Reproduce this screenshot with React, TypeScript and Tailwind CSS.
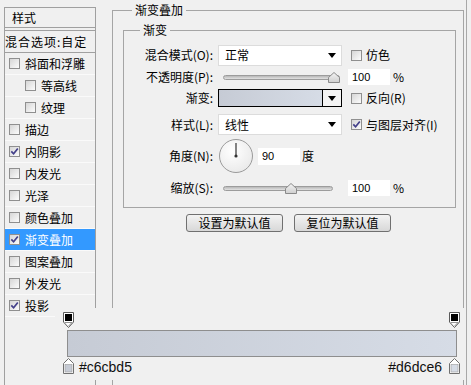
import React from "react";

const FONT = { fontFamily: '"Noto Sans CJK SC", "Noto Sans", sans-serif' };

function Box({ checked }: { checked?: boolean }) {
  return (
    <span className="w-[11px] h-[11px] border border-[#8f8f8f] bg-linear-to-br from-[#d6d6d6] to-[#fcfcfc] flex items-center justify-center shrink-0">
      {checked && (
        <svg width="9" height="9" viewBox="0 0 9 9">
          <path d="M1.3 4.3 L3.6 6.8 L7.8 1.4" stroke="#43408a" strokeWidth="1.7" fill="none" />
        </svg>
      )}
    </span>
  );
}

function Item({ label, checked, indent, active }: { label: string; checked?: boolean; indent?: boolean; active?: boolean }) {
  return (
    <div
      className={`h-[22px] flex items-center gap-[5px] border-b border-[#fafafa] ${indent ? "pl-[20px]" : "pl-[4px]"} ${active ? "bg-[#3399ff] text-white" : "text-black"}`}
    >
      <Box checked={checked} />
      <span className="text-[12px] leading-[14px]">{label}</span>
    </div>
  );
}

function Arrow() {
  return (
    <svg width="8" height="5" viewBox="0 0 8 5">
      <path d="M0 0 L8 0 L4 5 Z" fill="#000" />
    </svg>
  );
}

function Select({ value }: { value: string }) {
  return (
    <div className="w-[124px] h-[21px] bg-white border border-[#dcdcdc] flex items-center justify-between pl-[6px] pr-[5px]">
      <span className="text-[12px] leading-[14px]">{value}</span>
      <Arrow />
    </div>
  );
}

function Thumb() {
  return (
    <svg width="12" height="11" viewBox="0 0 12 11">
      <defs>
        <linearGradient id="tg" x1="0" y1="0" x2="0" y2="1">
          <stop offset="0" stopColor="#f4f4f4" />
          <stop offset="1" stopColor="#cfcfcf" />
        </linearGradient>
      </defs>
      <path d="M6 0.5 L11.5 5.5 L11.5 10.5 L0.5 10.5 L0.5 5.5 Z" fill="url(#tg)" stroke="#8a8a8a" />
    </svg>
  );
}

function Slider({ trackW, pos }: { trackW: number; pos: number }) {
  return (
    <div className="w-[124px] h-[12px] flex items-center">
      <div className="ml-[5px] relative h-[12px] flex items-center" style={{ width: trackW }}>
        <div className="w-full h-[5px] rounded-full border border-[#9c9c9c] bg-linear-to-b from-[#b8b8b8] to-[#e2e2e2]" />
        <div className="absolute top-[1px]" style={{ left: pos - 6 }}>
          <Thumb />
        </div>
      </div>
    </div>
  );
}

function NumInput({ value, w = 42, h = 16 }: { value: string; w?: number; h?: number }) {
  return (
    <div
      className="bg-white flex items-center pl-[4px] text-[11px] text-black"
      style={{ width: w, height: h, fontFamily: '"Liberation Sans", Arial, sans-serif' }}
    >
      {value}
    </div>
  );
}

function Label({ text }: { text: string }) {
  return <span className="w-[89px] text-right text-[12px] leading-[14px] shrink-0">{text}</span>;
}

function Button({ text }: { text: string }) {
  return (
    <div className="w-[97px] h-[18px] rounded-[3px] border border-[#707070] bg-linear-to-b from-[#f3f3f3] to-[#d8d8d8] flex items-center justify-center text-[12px] leading-[14px] text-black">
      {text}
    </div>
  );
}

function TopStop() {
  return (
    <svg width="11" height="16" viewBox="0 0 11 16">
      <path d="M0.5 0.5 H10.5 V10 L5.5 15.5 L0.5 10 Z" fill="#fff" stroke="#5a5a5a" />
      <rect x="2" y="2" width="7" height="7" fill="#000" />
      <path d="M2 10.5 H9 L5.5 14" fill="none" stroke="#777" strokeWidth="0.8" />
    </svg>
  );
}

function BottomStop({ color }: { color: string }) {
  return (
    <svg width="11" height="16" viewBox="0 0 11 16">
      <path d="M5.5 0.5 L10.5 5.5 V15.5 H0.5 V5.5 Z" fill="#fff" stroke="#707070" />
      <rect x="2" y="6.5" width="7" height="7.5" fill={color} stroke="#9a9a9a" strokeWidth="0.6" />
    </svg>
  );
}

export default function App() {
  return (
    <div className="relative w-[471px] h-[385px] bg-[#f0f0f0] overflow-hidden flex text-black" style={FONT}>
      {/* Left list */}
      <div className="ml-[4px] mt-[7px] w-[92px] h-[400px] border border-[#a0a0a0] shrink-0 flex flex-col">
        <div className="h-[20px] flex items-center pl-[7px] border-b border-[#a0a0a0] text-[12px] leading-[14px]">样式</div>
        <div className="h-[2px]" />
        <div className="h-[23px] flex items-center border-t border-b border-[#a0a0a0] text-[12px] leading-[14px] tracking-[1px]">
          混合选项:自定
        </div>
        <Item label="斜面和浮雕" />
        <Item label="等高线" indent />
        <Item label="纹理" indent />
        <Item label="描边" />
        <Item label="内阴影" checked />
        <Item label="内发光" />
        <Item label="光泽" />
        <Item label="颜色叠加" />
        <Item label="渐变叠加" checked active />
        <Item label="图案叠加" />
        <Item label="外发光" />
        <Item label="投影" checked />
      </div>

      {/* Right outer group */}
      <fieldset className="ml-[16px] mt-[4px] w-[352px] h-[420px] border border-[#a5a5a5] shrink-0">
        <legend className="ml-[19px] px-[3px] text-[12px] leading-[12px]">渐变叠加</legend>

        <fieldset className="ml-[10px] mt-[8px] w-[333px] h-[184px] border border-[#a5a5a5]">
          <legend className="ml-[16px] px-[3px] text-[12px] leading-[12px]">渐变</legend>

          {/* Row 1 */}
          <div className="mt-[8px] h-[22px] flex items-center">
            <Label text="混合模式(O):" />
            <div className="ml-[5px]">
              <Select value="正常" />
            </div>
            <div className="ml-[9px] flex items-center gap-[4px]">
              <Box />
              <span className="text-[12px] leading-[14px]">仿色</span>
            </div>
          </div>

          {/* Row 2 */}
          <div className="h-[22px] flex items-center">
            <Label text="不透明度(P):" />
            <div className="ml-[5px]">
              <Slider trackW={117} pos={111} />
            </div>
            <div className="ml-[6px]">
              <NumInput value="100" />
            </div>
            <span className="ml-[3px] text-[12px] leading-[14px]">%</span>
          </div>

          {/* Row 3 */}
          <div className="mt-[1px] h-[18px] flex items-center">
            <Label text="渐变:" />
            <div className="ml-[5px] w-[124px] h-[18px] border border-black flex">
              <div className="flex-1 bg-linear-to-r from-[#c6cbd5] to-[#d6dce6]" />
              <div className="w-[19px] border-l border-black bg-[#f4f4f4] flex items-center justify-center">
                <Arrow />
              </div>
            </div>
            <div className="ml-[9px] flex items-center gap-[4px]">
              <Box />
              <span className="text-[12px] leading-[14px]">反向(R)</span>
            </div>
          </div>

          {/* Row 4 */}
          <div className="mt-[7px] h-[21px] flex items-center">
            <Label text="样式(L):" />
            <div className="ml-[5px]">
              <Select value="线性" />
            </div>
            <div className="ml-[9px] flex items-center gap-[4px]">
              <Box checked />
              <span className="text-[12px] leading-[14px]">与图层对齐(I)</span>
            </div>
          </div>

          {/* Row 5 */}
          <div className="mt-[4px] h-[34px] flex items-center">
            <Label text="角度(N):" />
            <div className="ml-[6px] w-[34px] h-[34px] rounded-full border border-[#9a9a9a] bg-[radial-gradient(circle_at_40%_35%,#ffffff,#e4e4e4)] relative shrink-0">
              <svg className="absolute left-0 top-0" width="32" height="32" viewBox="0 0 32 32">
                <line x1="16" y1="16" x2="16" y2="3" stroke="#333" strokeWidth="1.2" />
                <circle cx="16" cy="16" r="1.6" fill="#333" />
              </svg>
            </div>
            <div className="ml-[5px]">
              <NumInput value="90" h={17} />
            </div>
            <span className="ml-[2px] text-[12px] leading-[14px]">度</span>
          </div>

          {/* Row 6 */}
          <div className="mt-[6px] h-[18px] flex items-center">
            <Label text="缩放(S):" />
            <div className="ml-[5px]">
              <Slider trackW={110} pos={68} />
            </div>
            <div className="ml-[6px]">
              <NumInput value="100" />
            </div>
            <span className="ml-[3px] text-[12px] leading-[14px]">%</span>
          </div>
        </fieldset>

        <div className="mt-[6px] ml-[73px] flex gap-[11px]">
          <Button text="设置为默认值" />
          <Button text="复位为默认值" />
        </div>
      </fieldset>

      <div className="ml-[2px] w-px h-full bg-[#a8a8a8] shrink-0" />

      {/* Gradient editor strip overlay */}
      <div className="absolute left-[55px] top-[308px] w-[411px] h-[72px] bg-[#f0f0f0] flex flex-col">
        <div className="mt-[4px] pl-[8px] pr-[6px] flex justify-between">
          <TopStop />
          <TopStop />
        </div>
        <div className="mt-[2px] ml-[12px] w-[390px] h-[27px] border border-[#8e8e8e] bg-linear-to-r from-[#c6cbd5] to-[#d6dce6]" />
        <div className="mt-[1px] pl-[8px] pr-[6px] flex justify-between items-start">
          <div className="flex items-start">
            <BottomStop color="#c6cbd5" />
            <span className="ml-[5px] mt-[1px] text-[14px] leading-[16px] text-[#111]" style={{ fontFamily: '"Liberation Sans", Arial, sans-serif' }}>
              #c6cbd5
            </span>
          </div>
          <div className="flex items-start">
            <span className="mr-[7px] mt-[1px] text-[14px] leading-[16px] text-[#111]" style={{ fontFamily: '"Liberation Sans", Arial, sans-serif' }}>
              #d6dce6
            </span>
            <BottomStop color="#d6dce6" />
          </div>
        </div>
      </div>
    </div>
  );
}
